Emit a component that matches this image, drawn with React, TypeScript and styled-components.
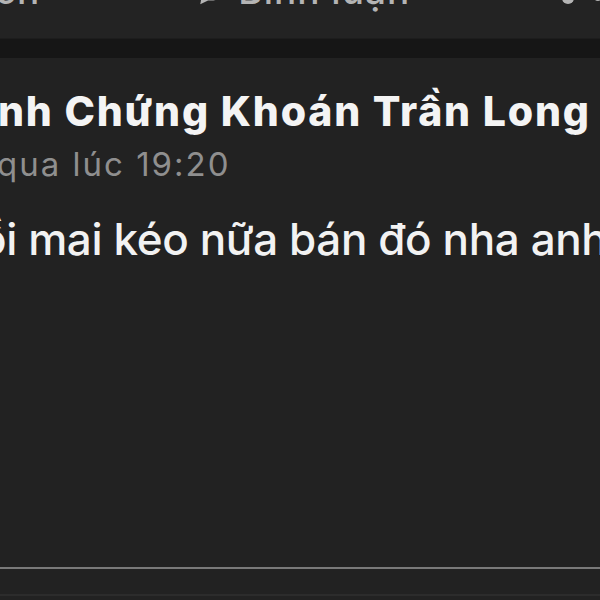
import styled, { createGlobalStyle } from "styled-components";

const Global = createGlobalStyle`
    html, body { margin: 0; padding: 0; background: #222222; }
    body { font-family: Inter, "Noto Sans", "Liberation Sans", sans-serif; }
`;

const Page = styled.div`
    width: 600px;
    height: 600px;
    overflow: hidden;
    display: flex;
    flex-direction: column;
    background: #222222;
`;

const ActionBar = styled.div`
    height: 38px;
    flex-shrink: 0;
    display: flex;
    align-items: flex-start;
    overflow: hidden;
    background: #232323;
    border-bottom: 1px solid #1d1d1d;
`;

const Action = styled.div<{ $shift: number }>`
    display: flex;
    align-items: center;
    gap: 12px;
    margin-top: -28px;
    margin-left: ${p => p.$shift}px;
    color: #b4b4b4;
    font-size: 37px;
    font-weight: 500;
    letter-spacing: 1px;
    white-space: nowrap;
    line-height: 38px;
`;

const Band = styled.div`
    height: 19px;
    flex-shrink: 0;
    background: #161616;
`;

const Post = styled.div`
    flex: 1;
    display: flex;
    flex-direction: column;
    padding-top: 29px;
    overflow: hidden;
    white-space: nowrap;
`;

const Author = styled.div`
    margin-left: -2px;
    color: #f4f4f4;
    font-size: 41px;
    font-weight: 800;
    letter-spacing: 1.8px;
    line-height: 48px;
`;

const Time = styled.div`
    margin-top: 11px;
    margin-left: -3px;
    color: #8f8f8f;
    font-size: 33px;
    font-weight: 400;
    letter-spacing: 2px;
    line-height: 36px;
`;

const Body = styled.div`
    margin-top: 30px;
    margin-left: -20px;
    color: #f2f2f2;
    font-size: 44px;
    font-weight: 500;
    letter-spacing: -0.4px;
    line-height: 54px;
`;

const Footer = styled.div`
    height: 29px;
    flex-shrink: 0;
    border-top: 2px solid #7a7a7a;
    border-bottom: 2px solid #2c2c2c;
    box-sizing: border-box;
    margin-bottom: 4px;
`;

function BubbleIcon() {
    return <svg width="30" height="30" viewBox="0 0 30 30" fill="none" stroke="#b4b4b4" strokeWidth="2.6" strokeLinecap="round">
        <path d="M15 3C8 3 3 7.5 3 13c0 3 1.5 5.6 4 7.4L6 26l6-3c1 .2 2 .3 3 .3 7 0 12-4.5 12-10S22 3 15 3z" />
    </svg>;
}

function ShareIcon() {
    return <svg width="40" height="32" viewBox="0 0 40 32" fill="#b4b4b4">
        <circle cx="8" cy="26" r="6" />
        <circle cx="38" cy="24" r="5" />
    </svg>;
}

export default function App() {
    return <Page>
        <Global />
        <ActionBar>
            <Action $shift={-64}>Thích</Action>
            <Action $shift={156}><BubbleIcon />Bình luận</Action>
            <Action $shift={150}><ShareIcon /></Action>
        </ActionBar>
        <Band />
        <Post>
            <Author>nh Chứng Khoán Trần Long</Author>
            <Time>qua lúc 19:20</Time>
            <Body>ồi mai kéo nữa bán đó nha anh</Body>
        </Post>
        <Footer />
    </Page>;
}
